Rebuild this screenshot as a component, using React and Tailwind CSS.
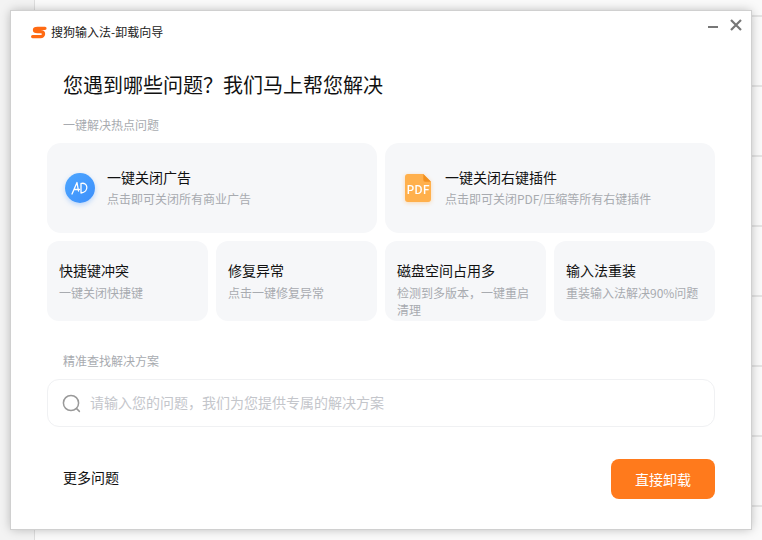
import React from 'react';

const font = { fontFamily: '"Noto Sans CJK SC", "Liberation Sans", sans-serif' };
const rows = [1, 2, 3, 4, 5, 6, 7];

function AdIcon() {
  return (
    <div className="w-[30px] h-[30px] rounded-full bg-gradient-to-br from-[#4da6ff] to-[#3d8ffb] shadow-[0_2px_5px_rgba(70,150,255,0.35)] flex items-center justify-center shrink-0">
      <svg width="18" height="14" viewBox="0 0 18 14" fill="none" stroke="#fff" strokeWidth="1.3" strokeLinecap="round" strokeLinejoin="round">
        <path d="M1 13L6 1.5L7.5 10M3 8.5H8.5" />
        <path d="M10 2.5V12M10 2.5C17 0.5 18.5 11 10 12" />
      </svg>
    </div>
  );
}

function PdfIcon() {
  return (
    <div className="relative ml-[1px] w-[26px] h-[28px] shrink-0 drop-shadow-[0_1px_2px_rgba(255,170,70,0.4)]">
      <svg width="26" height="28" viewBox="0 0 27 29" className="absolute inset-0">
        <path d="M3 0H19L27 8V26a3 3 0 0 1-3 3H3a3 3 0 0 1-3-3V3a3 3 0 0 1 3-3z" fill="#ffb04c" />
        <path d="M19 0L27 8H21a2 2 0 0 1-2-2z" fill="#f2901f" />
      </svg>
      <span className="absolute left-0 right-0 top-[8px] text-center text-white text-xs font-medium leading-[14px]">PDF</span>
    </div>
  );
}

function SmallCard({ title, desc }) {
  return (
    <div className="bg-[#f6f7f9] rounded-[12px] h-20 pl-3 pr-2 pt-[20px] overflow-hidden">
      <div className="text-sm leading-[18px] text-[#111]">{title}</div>
      <div className="mt-[5px] text-xs leading-[17px] text-[#a8abb0]">{desc}</div>
    </div>
  );
}

export default function App() {
  return (
    <div className="relative w-[762px] h-[540px] bg-[#fafafa] overflow-hidden flex" style={font}>
      {/* Page behind the dialog */}
      <div className="w-[35px] h-full bg-[#f3f3f3] border-r border-[#dedede] shrink-0" />
      <div className="flex-1">
        <div className="h-[17px] border-b-2 border-[#e4e4e4]" />
        {rows.map((r) => (
          <div key={r} className="h-[70px] border-b-2 border-[#e4e4e4]" />
        ))}
      </div>

      {/* Main window */}
      <div className="absolute left-[11px] top-[11px] w-[740px] h-[518px] bg-white shadow-[0_0_0_1px_#d0d0d0,0_0_10px_rgba(0,0,0,0.28)] flex flex-col">
        {/* Title bar */}
        <div className="relative flex items-center h-[42px] pl-[20px] shrink-0">
          <svg width="16" height="13" viewBox="0 0 16 13" className="mr-[4px]">
            <path d="M14 2.3H6.5C2.4 2.3 2.4 5.6 6.5 5.6H9.5C13.6 5.6 13.6 10.6 9.5 10.6H1.6" fill="none" stroke="#ff6a13" strokeWidth="3.2" strokeLinecap="round" />
          </svg>
          <span className="text-xs text-[#222] leading-none">搜狗输入法-卸载向导</span>
          <div className="absolute right-[9px] top-[8px] flex items-center gap-[12px]">
            <svg width="10" height="12" viewBox="0 0 10 12">
              <path d="M0 8H10" stroke="#777" strokeWidth="2" />
            </svg>
            <svg width="12" height="12" viewBox="0 0 12 12">
              <path d="M1 1L11 11M11 1L1 11" stroke="#777" strokeWidth="2.2" />
            </svg>
          </div>
        </div>

        {/* Content */}
        <div className="flex-1 px-9">
          <h1 className="pl-[16px] mt-[18px] text-[20px] leading-[28px] text-[#111] font-normal">您遇到哪些问题？我们马上帮您解决</h1>
          <div className="pl-[16px] mt-[17px] text-xs leading-[18px] text-[#a8abb0]">一键解决热点问题</div>

          {/* Large cards */}
          <div className="grid grid-cols-2 gap-2 mt-[9px]">
            <div className="bg-[#f6f7f9] rounded-[14px] h-[90px] flex items-center pl-[18px] gap-[12px]">
              <AdIcon />
              <div>
                <div className="text-sm leading-[18px] text-[#111]">一键关闭广告</div>
                <div className="mt-[4px] text-xs leading-[18px] text-[#a8abb0]">点击即可关闭所有商业广告</div>
              </div>
            </div>
            <div className="bg-[#f6f7f9] rounded-[14px] h-[90px] flex items-center pl-[19px] gap-[14px]">
              <PdfIcon />
              <div>
                <div className="text-sm leading-[18px] text-[#111]">一键关闭右键插件</div>
                <div className="mt-[4px] text-xs leading-[18px] text-[#a8abb0]">点击即可关闭PDF/压缩等所有右键插件</div>
              </div>
            </div>
          </div>

          {/* Small cards */}
          <div className="grid grid-cols-4 gap-2 mt-2">
            <SmallCard title="快捷键冲突" desc="一键关闭快捷键" />
            <SmallCard title="修复异常" desc="点击一键修复异常" />
            <SmallCard title="磁盘空间占用多" desc="检测到多版本，一键重启清理" />
            <SmallCard title="输入法重装" desc="重装输入法解决90%问题" />
          </div>

          <div className="pl-[16px] mt-[31px] text-xs leading-[18px] text-[#a8abb0]">精准查找解决方案</div>

          {/* Search */}
          <div className="mt-[9px] h-12 border border-[#f0f1f3] rounded-[12px] flex items-center pl-[14px] gap-[9px]">
            <svg width="19" height="19" viewBox="0 0 19 19" fill="none" stroke="#999" strokeWidth="1.5">
              <circle cx="9" cy="9" r="7.6" />
              <path d="M14.6 14.6L17.4 17.4" strokeLinecap="round" />
            </svg>
            <span className="pb-[2px] text-sm text-[#c4c6cb]">请输入您的问题，我们为您提供专属的解决方案</span>
          </div>

          {/* Footer */}
          <div className="flex items-center justify-between mt-8 pl-[16px]">
            <span className="pb-[4px] text-sm text-[#111]">更多问题</span>
            <button className="w-[104px] h-10 rounded-[8px] bg-[#ff7a1c] text-white text-sm">直接卸载</button>
          </div>
        </div>
      </div>
    </div>
  );
}
